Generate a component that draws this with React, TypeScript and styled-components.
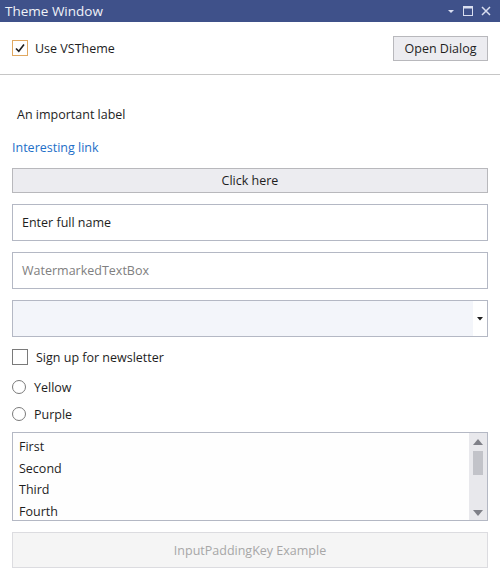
import React from 'react';
import styled, { createGlobalStyle } from 'styled-components';

const GlobalStyle = createGlobalStyle`
  html, body { margin: 0; padding: 0; background: #ffffff; }
  body { font-family: "Open Sans", "Noto Sans", sans-serif; font-size: 12px; color: #1e1e1e; }
  * { box-sizing: border-box; }
`;

const Window = styled.div`
  width: 500px;
  height: 583px;
  background: #ffffff;
  display: flex;
  flex-direction: column;
  overflow: hidden;
`;

const TitleBar = styled.div`
  height: 22px;
  background: #3f518a;
  color: #f0f2f8;
  display: flex;
  align-items: center;
  justify-content: space-between;
  padding: 0 8px 0 5px;
  font-size: 13.5px;
`;

const TitleControls = styled.div`
  display: flex;
  align-items: center;
  gap: 6px;
`;

const TopRow = styled.div`
  height: 53px;
  display: flex;
  align-items: center;
  justify-content: space-between;
  padding: 0 12px;
  border-bottom: 1px solid #c6c6c6;
`;

const CheckRow = styled.label`
  display: flex;
  align-items: center;
  gap: 7px;
  font-size: 12.5px;
`;

const CheckBox = styled.span<{ $accent?: boolean }>`
  width: 16px;
  height: 16px;
  border: 1px solid ${p => (p.$accent ? '#e0a860' : '#7a7a7a')};
  background: #fff;
  display: flex;
  align-items: center;
  justify-content: center;
`;

const Button = styled.button<{ $full?: boolean; $tall?: boolean; $disabled?: boolean }>`
  font-family: inherit;
  font-size: 12.5px;
  color: ${p => (p.$disabled ? '#a7a7a7' : '#1e1e1e')};
  background: ${p => (p.$disabled ? '#f5f5f5' : '#ececf0')};
  border: 1px solid ${p => (p.$disabled ? '#dcdce0' : '#b8b8bc')};
  padding: 0 10px;
  height: ${p => (p.$tall ? '36px' : '25px')};
  width: ${p => (p.$full ? '100%' : 'auto')};
  margin: 0;
`;

const Body = styled.div`
  display: flex;
  flex-direction: column;
  padding: 0 12px;
`;

const Label = styled.div`
  font-size: 12.5px;
  padding: 31px 0 0 5px;
  height: 50px;
`;

const Link = styled.a`
  font-size: 12.5px;
  color: #1e6fc8;
  margin-top: 14px;
  height: 19px;
  text-decoration: none;
`;

const ClickWrap = styled.div`
  margin-top: 10px;
  display: flex;
`;

const TextBox = styled.div<{ $placeholder?: boolean }>`
  height: 37px;
  border: 1px solid #b4b8c4;
  background: #ffffff;
  margin-top: 11px;
  display: flex;
  align-items: center;
  padding-left: 9px;
  font-size: 12.5px;
  color: ${p => (p.$placeholder ? '#808080' : '#1e1e1e')};
`;

const Combo = styled.div`
  height: 37px;
  border: 1px solid #b4b8c4;
  background: #f3f5fa;
  margin-top: 11px;
  display: flex;
  align-items: center;
  justify-content: flex-end;
`;

const ComboArrow = styled.div`
  width: 14px;
  height: 100%;
  background: #ffffff;
  display: flex;
  align-items: center;
  justify-content: center;
`;

const OptionRow = styled.label<{ $gap: number }>`
  display: flex;
  align-items: center;
  gap: 8px;
  margin-top: ${p => p.$gap}px;
  font-size: 12.5px;
  height: 18px;
`;

const Radio = styled.span`
  width: 14px;
  height: 14px;
  border: 1px solid #7a7a7a;
  border-radius: 50%;
  background: #fff;
`;

const List = styled.div`
  height: 89px;
  margin-top: 9px;
  border: 1px solid #b4b8c4;
  display: flex;
  background: #fefefe;
`;

const ListItems = styled.div`
  flex: 1;
  padding: 3px 6px;
  display: flex;
  flex-direction: column;
  overflow: hidden;
`;

const ListItem = styled.div`
  height: 21.5px;
  line-height: 21.5px;
  font-size: 12.5px;
  flex-shrink: 0;
`;

const ScrollBar = styled.div`
  width: 18px;
  background: #e8e8ec;
  display: flex;
  flex-direction: column;
  align-items: center;
  justify-content: space-between;
  padding: 6px 0 4px;
`;

const Thumb = styled.div`
  width: 10px;
  height: 24px;
  background: #c2c3c9;
  margin-top: 6px;
  margin-bottom: auto;
`;

const BottomWrap = styled.div`
  margin-top: 11px;
  display: flex;
`;

const Check = () => (
  <svg width="12" height="12" viewBox="0 0 12 12">
    <path d="M2 6.5 L4.8 9.3 L10 2.5" stroke="#1e1e1e" strokeWidth="1.6" fill="none" />
  </svg>
);

export default function App() {
  return (
    <Window>
      <GlobalStyle />
      <TitleBar>
        <span>Theme Window</span>
        <TitleControls>
          <svg width="10" height="10" viewBox="0 0 10 10">
            <path d="M2 4 L8 4 L5 7 Z" fill="#d9def0" />
          </svg>
          <svg width="12" height="12" viewBox="0 0 12 12">
            <rect x="1.5" y="1.5" width="9" height="9" fill="none" stroke="#d9def0" strokeWidth="1" />
            <rect x="1.5" y="1.5" width="9" height="2" fill="#d9def0" />
          </svg>
          <svg width="12" height="12" viewBox="0 0 12 12">
            <path d="M2 2 L10 10 M10 2 L2 10" stroke="#d9def0" strokeWidth="1.5" />
          </svg>
        </TitleControls>
      </TitleBar>
      <TopRow>
        <CheckRow>
          <CheckBox $accent>
            <Check />
          </CheckBox>
          Use VSTheme
        </CheckRow>
        <Button style={{ width: 95 }}>Open Dialog</Button>
      </TopRow>
      <Body>
        <Label>An important label</Label>
        <Link href="#">Interesting link</Link>
        <ClickWrap>
          <Button $full>Click here</Button>
        </ClickWrap>
        <TextBox>Enter full name</TextBox>
        <TextBox $placeholder>WatermarkedTextBox</TextBox>
        <Combo>
          <ComboArrow>
            <svg width="6" height="4" viewBox="0 0 6 4">
              <path d="M0 0 L6 0 L3 3.5 Z" fill="#1e1e1e" />
            </svg>
          </ComboArrow>
        </Combo>
        <OptionRow $gap={11}>
          <CheckBox />
          Sign up for newsletter
        </OptionRow>
        <OptionRow $gap={12}>
          <Radio />
          Yellow
        </OptionRow>
        <OptionRow $gap={9}>
          <Radio />
          Purple
        </OptionRow>
        <List>
          <ListItems>
            <ListItem>First</ListItem>
            <ListItem>Second</ListItem>
            <ListItem>Third</ListItem>
            <ListItem>Fourth</ListItem>
          </ListItems>
          <ScrollBar>
            <svg width="10" height="6" viewBox="0 0 10 6">
              <path d="M0 6 L10 6 L5 0 Z" fill="#7f8088" />
            </svg>
            <Thumb />
            <svg width="10" height="6" viewBox="0 0 10 6">
              <path d="M0 0 L10 0 L5 6 Z" fill="#7f8088" />
            </svg>
          </ScrollBar>
        </List>
        <BottomWrap>
          <Button $full $tall $disabled>InputPaddingKey Example</Button>
        </BottomWrap>
      </Body>
    </Window>
  );
}
